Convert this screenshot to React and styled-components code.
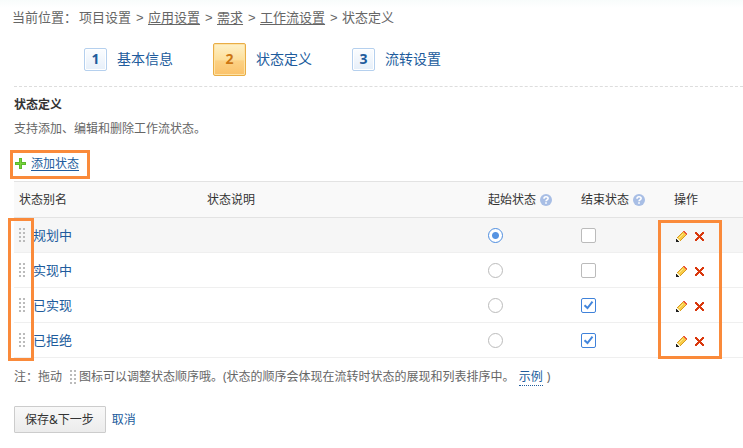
import React, { useState } from 'react';
import styled, { createGlobalStyle } from 'styled-components';

const BLUE = '#205b9c';

const GlobalStyle = createGlobalStyle`
  *, *::before, *::after { box-sizing: border-box; }
  body {
    margin: 0;
    background: #fff;
    color: #666;
    font: 12px/20px "Noto Sans", "Noto Sans CJK SC", sans-serif;
  }
  button, input { font: inherit; margin: 0; }
`;

const Page = styled.main`
  padding: 8px 0 14px 14px;
  background: linear-gradient(#f8fcfb, #fff 8px);
`;

const Breadcrumb = styled.nav`
  display: flex;
  gap: 5px;
  margin-left: -2px;
  font-size: 13px;
  white-space: nowrap;
  font-family: "Liberation Sans", "Noto Sans CJK SC", sans-serif;
`;

const CrumbLabel = styled.span`
  width: 62px;
`;

const CrumbLink = styled.a`
  color: #666;
  text-decoration: underline;
  text-underline-offset: 2px;
`;

const Separator = styled.span`
  width: 7px;
`;

const Steps = styled.ol`
  display: flex;
  align-items: center;
  gap: 40px;
  height: 59px;
  margin: 0;
  padding: 4px 0 0 70px;
  list-style: none;
  border-bottom: 1px dashed #ddd;
`;

const Step = styled.li`
  display: flex;
  align-items: center;
  gap: 10px;
  color: ${BLUE};
  font-size: 14px;
  white-space: nowrap;
`;

const StepNumber = styled.span`
  display: flex;
  align-items: center;
  justify-content: center;
  width: ${(p) => (p.$active ? 33 : 23)}px;
  height: ${(p) => (p.$active ? 33 : 23)}px;
  border: 1px solid ${(p) => (p.$active ? '#e9ad45' : '#b5d0ee')};
  border-radius: 2px;
  background: ${(p) =>
    p.$active
      ? 'linear-gradient(#fef1c8, #fddf9b 50%, #fcd184 55%, #fbc26a)'
      : 'linear-gradient(#fbfdff, #f1f6fc 50%, #e6eff9)'};
  box-shadow: inset 0 0 0 1px ${(p) => (p.$active ? '#fde2a5' : '#fff')};
  color: ${(p) => (p.$active ? '#cc7613' : BLUE)};
  font-weight: 700;
  font-size: 14px;
`;

const Title = styled.h1`
  margin: 8px 0 4px;
  color: #333;
  font-size: 12px;
  line-height: 20px;
`;

const Description = styled.p`
  margin: 0;
`;

const AddFrame = styled.div`
  display: flex;
  align-items: center;
  width: max-content;
  height: 29px;
  margin: 11px 0 2px -4px;
  padding: 0 8px 2px 2px;
  border: 3px solid #fa8a3a;
`;

const AddLink = styled.a`
  display: flex;
  align-items: center;
  gap: 4px;
  color: ${BLUE};
  text-underline-offset: 2px;
`;

const TableArea = styled.div`
  position: relative;
`;

const Table = styled.table`
  width: 100%;
  table-layout: fixed;
  border-collapse: separate;
  border-spacing: 0;
  border-top: 1px solid #e3e3e3;
`;

const Column = styled.col`
  width: ${(p) => (p.$width ? `${p.$width}px` : 'auto')};
`;

const HeaderCell = styled.th`
  height: 36px;
  padding: 0 6px;
  border-bottom: 1px solid #e3e3e3;
  background: #f9f9f9;
  color: #333;
  font-weight: 400;
  text-align: left;
  white-space: nowrap;
  &:first-child { padding-left: 5px; }
`;

const Row = styled.tr`
  background: ${(p) => (p.$highlighted ? '#f6f6f6' : '#fff')};
`;

const Cell = styled.td`
  height: 35px;
  padding: 0 6px;
  border-bottom: 1px solid #efefef;
  &:first-child { padding-left: 5px; }
  &:last-child { padding-left: 8px; }
`;

const Inline = styled.div`
  display: flex;
  align-items: center;
  gap: ${(p) => p.$gap}px;
`;

const StateLink = styled.a`
  color: ${BLUE};
  font-size: 13px;
  text-decoration: none;
`;

const Choice = styled.label`
  display: grid;
  width: 15px;
  height: 15px;
  place-items: center;
  > * { grid-area: 1 / 1; }
`;

const Radio = styled.input`
  appearance: none;
  width: 15px;
  height: 15px;
  border: 1px solid #bbb;
  border-radius: 50%;
  background: #fff;
  &:checked {
    border-color: #4f8ee0;
    background: radial-gradient(circle, #5794e2 3px, #fff 4px);
  }
`;

const Checkbox = styled.input`
  appearance: none;
  width: 15px;
  height: 15px;
  border: 1px solid #bbb;
  border-radius: 2px;
  background: #fff;
  &:checked { border-color: #3f82da; }
  & + svg { visibility: hidden; pointer-events: none; }
  &:checked + svg { visibility: visible; }
`;

const IconButton = styled.button`
  display: flex;
  padding: 2px 0 0;
  border: 0;
  background: none;
  cursor: pointer;
`;

const HelpButton = styled(IconButton)`
  padding: 0;
`;

const Highlight = styled.div`
  position: absolute;
  border: 3px solid #fa8a3a;
  pointer-events: none;
`;

const HandleHighlight = styled(Highlight)`
  top: 37px;
  bottom: -3px;
  left: -6px;
  width: 26px;
`;

const ActionHighlight = styled(Highlight)`
  top: 39px;
  bottom: -1px;
  right: 21px;
  width: 64px;
`;

const Note = styled.p`
  display: flex;
  align-items: center;
  margin: 9px 0 0;
  white-space: nowrap;
`;

const NoteHandle = styled.span`
  display: flex;
  padding: 0 3px 0 8px;
`;

const ExampleLink = styled.a`
  margin: 0 4px;
  border-bottom: 1px dotted ${BLUE};
  color: ${BLUE};
  line-height: 16px;
  text-decoration: none;
`;

const Actions = styled.div`
  display: flex;
  align-items: center;
  gap: 6px;
  margin-top: 19px;
`;

const SaveButton = styled.button`
  height: 27px;
  padding: 0 11px 0 10px;
  border: 1px solid #ccc;
  border-radius: 1px;
  background: linear-gradient(#f8f8f8, #ececec);
  color: #333;
  line-height: 20px;
`;

const CancelLink = styled.a`
  color: ${BLUE};
  text-decoration: none;
`;

const DragHandle = () => (
  <svg width="6" height="14" viewBox="0 0 6 14" fill="#bbb" shapeRendering="crispEdges" aria-hidden="true">
    {[0, 4, 8, 12].map((y) => (
      <g key={y}>
        <rect x="0" y={y} width="2" height="2" />
        <rect x="4" y={y} width="2" height="2" />
      </g>
    ))}
  </svg>
);

const PlusIcon = () => (
  <svg width="12" height="12" viewBox="0 0 12 12" aria-hidden="true">
    <path d="M4 0h3v4h4v3H7v4H4V7H0V4h4z" fill="#5cba2c" />
    <path d="M5 1h1v4h4v1H6v4H5V6H1V5h4z" fill="#7ad23c" />
  </svg>
);

const HelpIcon = () => (
  <svg width="12" height="12" viewBox="0 0 12 12" aria-hidden="true">
    <circle cx="6" cy="6" r="6" fill="#a8bee5" />
    <path d="M4 4.700C4 2.200 8.100 2.200 8.100 4.500 8.100 5.900 6 5.900 6 7.300" fill="none" stroke="#fff" strokeWidth="1.600" />
    <rect x="5.200" y="8.200" width="1.600" height="1.600" fill="#fff" />
  </svg>
);

const CheckMark = () => (
  <svg width="15" height="15" viewBox="0 0 15 15" aria-hidden="true">
    <path d="M3.500 7.200 6.500 10 11.500 3.700" fill="none" stroke="#4386dc" strokeWidth="2" />
  </svg>
);

const PencilIcon = () => (
  <svg width="11" height="11" viewBox="0 0 11 11" shapeRendering="crispEdges" aria-hidden="true">
    <path d="M6 1h2v1h1v1h1v2H9v1H8v1H7v1H6v1H5v1H3V9H2V8H1V6h1V5h1V4h1V3h1V2h1z" fill="#f8cc48" />
    <path d="M1 6h1V5h1V4h1V3h1V2h1V1h1v1H6v1H5v1H4v1H3v1H2v1H1zM9 4h1v1H9v1H8v1H7v1H6v1H5v1H4V9h1V8h1V7h1V6h1V5h1z" fill="#d79a20" />
    <path d="M3 6h1V5h1V4h1V3h1v1H6v1H5v1H4v1H3z" fill="#ffe98f" />
    <path d="M1 7h1v1h1v1h1v1H2V9H1z" fill="#fbf0cc" />
    <path d="M7 0h2v1h1v1h1v2h-1V3H9V2H8V1H7z" fill="#e9533a" />
    <path d="M0 8h1v1h1v1h1v1H0z" fill="#222" />
  </svg>
);

const DeleteIcon = () => (
  <svg width="9" height="9" viewBox="0 0 9 9" fill="#d9380d" shapeRendering="crispEdges" aria-hidden="true">
    <path d="M0 0h2v1h1v1h1v1h1V2h1V1h1V0h2v2H8v1H7v1H6v1h1v1h1v1h1v2H7V8H6V7H5V6H4v1H3v1H2v1H0V7h1V6h1V5h1V4H2V3H1V2H0z" />
  </svg>
);

const STEPS = ['基本信息', '状态定义', '流转设置'];

const STATES = [
  { name: '规划中', end: false },
  { name: '实现中', end: false },
  { name: '已实现', end: true },
  { name: '已拒绝', end: true },
];

export default function App() {
  const [start, setStart] = useState(0);

  return (
    <>
      <GlobalStyle />
      <Page>
        <Breadcrumb aria-label="当前位置">
          <CrumbLabel>当前位置：</CrumbLabel>
          <span>项目设置</span>
          <Separator>&gt;</Separator>
          <CrumbLink href="#app">应用设置</CrumbLink>
          <Separator>&gt;</Separator>
          <CrumbLink href="#story">需求</CrumbLink>
          <Separator>&gt;</Separator>
          <CrumbLink href="#workflow">工作流设置</CrumbLink>
          <Separator>&gt;</Separator>
          <span>状态定义</span>
        </Breadcrumb>

        <Steps>
          {STEPS.map((label, i) => (
            <Step key={label} aria-current={i === 1 ? 'step' : undefined}>
              <StepNumber $active={i === 1}>{i + 1}</StepNumber>
              {label}
            </Step>
          ))}
        </Steps>

        <Title>状态定义</Title>
        <Description>支持添加、编辑和删除工作流状态。</Description>

        <AddFrame>
          <AddLink href="#add">
            <PlusIcon />
            添加状态
          </AddLink>
        </AddFrame>

        <TableArea>
          <Table>
            <colgroup>
              <Column $width={187} />
              <Column />
              <Column $width={93} />
              <Column $width={93} />
              <Column $width={75} />
            </colgroup>
            <thead>
              <tr>
                <HeaderCell>状态别名</HeaderCell>
                <HeaderCell>状态说明</HeaderCell>
                {['起始状态', '结束状态'].map((label) => (
                  <HeaderCell key={label}>
                    <Inline $gap={4}>
                      {label}
                      <HelpButton type="button" aria-label={`${label}说明`}>
                        <HelpIcon />
                      </HelpButton>
                    </Inline>
                  </HeaderCell>
                ))}
                <HeaderCell>操作</HeaderCell>
              </tr>
            </thead>
            <tbody>
              {STATES.map((state, i) => (
                <Row key={state.name} $highlighted={i === 0}>
                  <Cell>
                    <Inline $gap={8}>
                      <DragHandle />
                      <StateLink href="#state">{state.name}</StateLink>
                    </Inline>
                  </Cell>
                  <Cell />
                  <Cell>
                    <Choice>
                      <Radio
                        type="radio"
                        name="start"
                        aria-label={`${state.name} 起始状态`}
                        checked={start === i}
                        onChange={() => setStart(i)}
                      />
                    </Choice>
                  </Cell>
                  <Cell>
                    <Choice>
                      <Checkbox
                        type="checkbox"
                        aria-label={`${state.name} 结束状态`}
                        defaultChecked={state.end}
                      />
                      <CheckMark />
                    </Choice>
                  </Cell>
                  <Cell>
                    <Inline $gap={8}>
                      <IconButton type="button" aria-label={`编辑${state.name}`}>
                        <PencilIcon />
                      </IconButton>
                      <IconButton type="button" aria-label={`删除${state.name}`}>
                        <DeleteIcon />
                      </IconButton>
                    </Inline>
                  </Cell>
                </Row>
              ))}
            </tbody>
          </Table>
          <HandleHighlight />
          <ActionHighlight />
        </TableArea>

        <Note>
          注：拖动
          <NoteHandle>
            <DragHandle />
          </NoteHandle>
          图标可以调整状态顺序哦。(状态的顺序会体现在流转时状态的展现和列表排序中。
          <ExampleLink href="#example">示例</ExampleLink>)
        </Note>

        <Actions>
          <SaveButton type="button">保存&amp;下一步</SaveButton>
          <CancelLink href="#cancel">取消</CancelLink>
        </Actions>
      </Page>
    </>
  );
}
